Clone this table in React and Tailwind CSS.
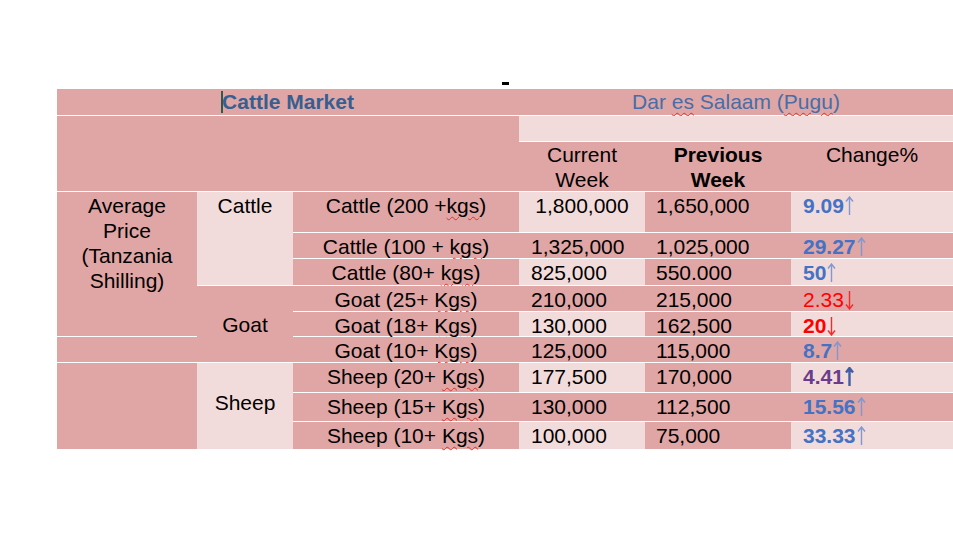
const DARK = 'bg-[#dfa6a5]'
const LIGHT = 'bg-[#f2dcdb]'

function Wavy({ children }) {
  return (
    <span className="underline decoration-wavy decoration-[#e0302a] decoration-1 underline-offset-[3px]">
      {children}
    </span>
  )
}

function Arrow({ down, stroke, width = 1.4 }) {
  return (
    <svg width="9" height="20" viewBox="0 0 9 20" className="ml-[1px] inline-block align-[-3px]">
      {down ? (
        <path d="M4.5 1 V19 M1 14.5 L4.5 19 L8 14.5" fill="none" stroke={stroke} strokeWidth={width} />
      ) : (
        <path d="M4.5 19 V1 M1 5.5 L4.5 1 L8 5.5" fill="none" stroke={stroke} strokeWidth={width} />
      )}
    </svg>
  )
}

function Change({ value, down, bold = true, color, arrowColor, arrowWidth }) {
  const textColor = color || (down ? 'text-[#ff0000]' : 'text-[#4472c4]')
  const stroke = arrowColor || (down ? '#f52a2a' : '#8197cf')
  return (
    <span className={`${textColor} ${bold ? 'font-bold' : 'font-normal'} whitespace-nowrap`}>
      {value}
      <Arrow down={down} stroke={stroke} width={arrowWidth} />
    </span>
  )
}

const rows = [
  { label: <>Cattle (200 +<Wavy>kgs</Wavy>)</>, cur: '1,800,000', prev: '1,650,000', change: <Change value="9.09" />, center: true },
  { label: <>Cattle (100 + <Wavy>kgs</Wavy>)</>, cur: '1,325,000', prev: '1,025,000', change: <Change value="29.27" /> },
  { label: <>Cattle (80+ <Wavy>kgs</Wavy>)</>, cur: '825,000', prev: '550.000', change: <Change value="50" /> },
  { label: <>Goat (25+ <Wavy>Kgs</Wavy>)</>, cur: '210,000', prev: '215,000', change: <Change value="2.33" down bold={false} /> },
  { label: <>Goat (18+ <Wavy>Kgs</Wavy>)</>, cur: '130,000', prev: '162,500', change: <Change value="20" down /> },
  { label: <>Goat (10+ <Wavy>Kgs</Wavy>)</>, cur: '125,000', prev: '115,000', change: <Change value="8.7" /> },
  {
    label: <>Sheep (20+ <Wavy>Kgs</Wavy>)</>,
    cur: '177,500',
    prev: '170,000',
    change: <Change value="4.41" color="text-[#6a3d8c]" arrowColor="#3f5ea8" arrowWidth={2.4} />,
  },
  { label: <>Sheep (15+ <Wavy>Kgs</Wavy>)</>, cur: '130,000', prev: '112,500', change: <Change value="15.56" /> },
  { label: <>Sheep (10+ <Wavy>Kgs</Wavy>)</>, cur: '100,000', prev: '75,000', change: <Change value="33.33" /> },
]

const rowStart = [
  'row-start-4', 'row-start-5', 'row-start-6', 'row-start-7', 'row-start-8',
  'row-start-9', 'row-start-10', 'row-start-11', 'row-start-12',
]

export default function App() {
  return (
    <div className="h-[536px] w-[953px] overflow-hidden bg-white font-['Liberation_Sans',Arial,sans-serif] text-[21px] leading-[25px] text-black">
      <div className="flex h-[89px] items-end">
        <span className="mb-[4px] ml-[502px] h-[3px] w-[7px] bg-black" />
      </div>

      <div className="ml-[57px] grid grid-cols-[140px_96px_226px_126px_146px_162px] grid-rows-[26px_25px_49px_40px_25px_26px_25px_24px_25px_29px_28px_27px] gap-y-px">
        {/* header */}
        <div className={`col-span-3 col-start-1 row-start-1 ${DARK} flex justify-center`}>
          <span className="relative font-bold text-[#365f91]">
            <span className="absolute -left-[1px] top-[2px] h-[22px] w-[2px] bg-[#2d5a4a]" />
            Cattle Market
          </span>
        </div>
        <div className={`col-span-3 col-start-4 row-start-1 ${DARK} text-center text-[#466ea8]`}>
          Dar <Wavy>es</Wavy> Salaam (<Wavy>Pugu</Wavy>)
        </div>

        <div className={`col-span-3 col-start-1 row-span-2 row-start-2 ${DARK}`} />
        <div className={`col-span-3 col-start-4 row-start-2 ${LIGHT}`} />

        <div className={`col-start-4 row-start-3 ${DARK} text-center`}>Current<br />Week</div>
        <div className={`col-start-5 row-start-3 ${DARK} text-center font-bold`}>Previous<br />Week</div>
        <div className={`col-start-6 row-start-3 ${DARK} text-center`}>Change%</div>

        {/* first column */}
        <div className={`col-start-1 row-span-5 row-start-4 ${DARK} pt-px text-center`}>
          Average<br />Price<br />(Tanzania<br />Shilling)
        </div>
        <div className={`col-start-1 row-start-9 ${DARK}`} />
        <div className={`col-start-1 row-span-3 row-start-10 ${DARK}`} />

        {/* group column */}
        <div className={`col-start-2 row-span-3 row-start-4 ${LIGHT} pt-px text-center`}>Cattle</div>
        <div className={`col-start-2 row-span-3 row-start-7 ${DARK} flex items-center justify-center`}>Goat</div>
        <div className={`col-start-2 row-span-3 row-start-10 ${LIGHT} flex items-center justify-center pb-2`}>Sheep</div>

        {rows.map((r, i) => {
          const band = i % 2 === 0 ? LIGHT : DARK
          const rs = rowStart[i]
          return [
            <div key={`l${i}`} className={`col-start-3 ${rs} ${DARK} pt-px text-center`}>{r.label}</div>,
            <div key={`c${i}`} className={`col-start-4 ${rs} ${band} pt-px ${r.center ? 'text-center' : 'pl-[12px]'}`}>{r.cur}</div>,
            <div key={`p${i}`} className={`col-start-5 ${rs} ${DARK} pl-[11px] pt-px`}>{r.prev}</div>,
            <div key={`x${i}`} className={`col-start-6 ${rs} ${band} pl-[12px] pt-px`}>{r.change}</div>,
          ]
        })}
      </div>
    </div>
  )
}
